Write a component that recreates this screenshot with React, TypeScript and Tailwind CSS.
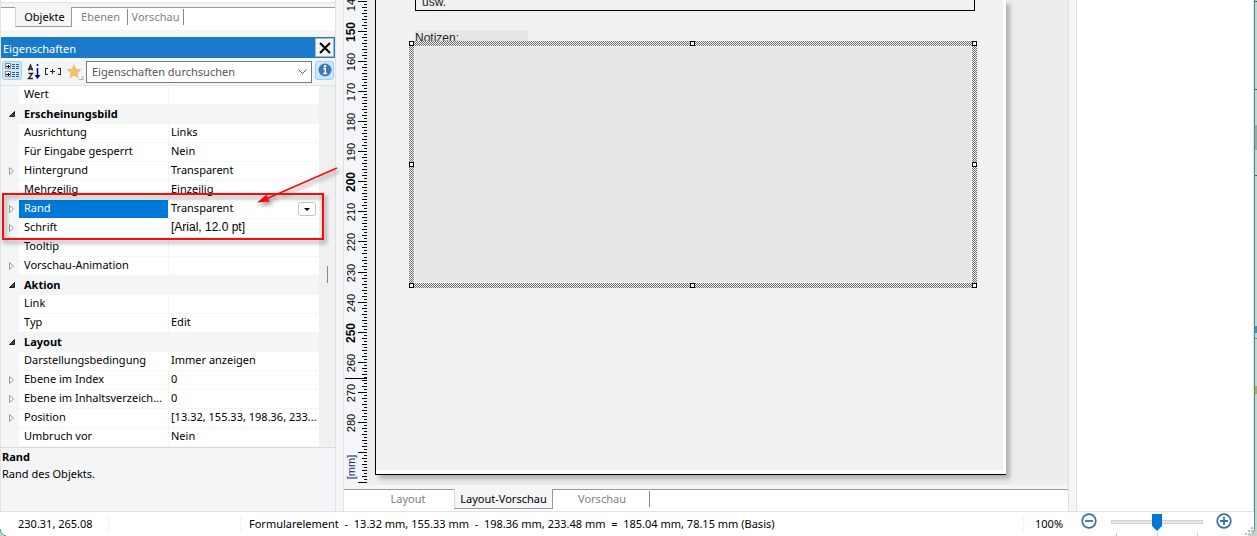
import React from "react";

type Row = { name: string; value?: string; kind?: "cat" | "exp"; selected?: boolean; arial?: boolean };

const rows: Row[] = [
  { name: "Wert" },
  { name: "Erscheinungsbild", kind: "cat" },
  { name: "Ausrichtung", value: "Links" },
  { name: "Für Eingabe gesperrt", value: "Nein" },
  { name: "Hintergrund", value: "Transparent", kind: "exp" },
  { name: "Mehrzeilig", value: "Einzeilig" },
  { name: "Rand", value: "Transparent", kind: "exp", selected: true },
  { name: "Schrift", value: "[Arial, 12.0 pt]", kind: "exp", arial: true },
  { name: "Tooltip" },
  { name: "Vorschau-Animation", kind: "exp" },
  { name: "Aktion", kind: "cat" },
  { name: "Link" },
  { name: "Typ", value: "Edit" },
  { name: "Layout", kind: "cat" },
  { name: "Darstellungsbedingung", value: "Immer anzeigen" },
  { name: "Ebene im Index", value: "0", kind: "exp" },
  { name: "Ebene im Inhaltsverzeich...", value: "0", kind: "exp" },
  { name: "Position", value: "[13.32, 155.33, 198.36, 233...", kind: "exp" },
  { name: "Umbruch vor", value: "Nein" },
];

function Expander({ open }: { open: boolean }) {
  return (
    <svg width="8" height="10" viewBox="0 0 8 10" className="ml-[7px] block">
      {open ? (
        <path d="M1.5 7.5 L6.5 2.5 V7.5 Z" fill="#444" stroke="#222" strokeWidth="1" />
      ) : (
        <path d="M1.5 1.5 V8.5 L5.5 5 Z" fill="#fff" stroke="#9a9a9a" strokeWidth="1" />
      )}
    </svg>
  );
}

function PropertyRow({ row }: { row: Row }) {
  if (row.kind === "cat") {
    return (
      <tr className="h-[19px] bg-[#f4f5f7]">
        <td className="p-0 pb-0.5"><Expander open /></td>
        <th colSpan={2} className="p-0 pb-0.5 pl-[5px] text-left leading-4 font-bold">{row.name}</th>
      </tr>
    );
  }
  return (
    <tr className="h-[19px]">
      <td className="bg-[#f4f5f7] p-0 pb-0.5">{row.kind === "exp" && <Expander open={false} />}</td>
      <td className={row.selected
        ? "overflow-hidden border-r border-b border-[#f4f5f7] bg-[#0078d7] p-0 pb-0.5 pl-[5px] leading-4 whitespace-nowrap text-white"
        : "overflow-hidden border-r border-b border-[#f4f5f7] bg-white p-0 pb-0.5 pl-[5px] leading-4 whitespace-nowrap"}>
        {row.name}
      </td>
      <td className="border-b border-[#f4f5f7] bg-white p-0 pl-0.5">
        <div className="flex h-[18px] items-start justify-between pr-[3px] leading-4">
          <span className={row.arial ? "truncate font-['Liberation_Sans',sans-serif] text-[12px]" : "whitespace-nowrap"}>{row.value}</span>
          {row.selected && (
            <button aria-label="Auswahl öffnen" className="mt-0.5 flex h-3.5 w-[18px] shrink-0 items-center justify-center rounded-[3px] border border-[#c4c4c4] bg-white">
              <svg width="6" height="3" viewBox="0 0 6 3"><path d="M0 0H6L3 3Z" fill="#000" /></svg>
            </button>
          )}
        </div>
      </td>
    </tr>
  );
}

function Sidebar() {
  return (
    <aside className="flex w-[336px] shrink-0 flex-col border-x border-[#dfe1e4]">
      <div className="h-[3px] border-b border-[#dfe1e4] bg-white" />
      <div className="mt-1 mb-[7px] flex h-[23px] items-start border-t border-[#999] bg-white" role="tablist">
        <button role="tab" aria-selected="true" className="-mt-px ml-3.5 h-5 w-[57px] border-r border-b border-l border-[#999] border-l-[#d8d8d8] bg-[#f4f5f7] pl-0.5">Objekte</button>
        <button role="tab" className="mt-px h-4 w-14 border-r border-[#888] pl-0.5 text-[#808080]">Ebenen</button>
        <button role="tab" className="mt-px h-4 w-14 border-r border-[#888] text-[#808080]">Vorschau</button>
      </div>
      <div className="flex h-[21px] shrink-0 items-center justify-between bg-[#1979ca] pr-px pl-0.5 text-white">
        <h2 className="pt-0.5">Eigenschaften</h2>
        <button aria-label="Schließen" className="flex h-[19px] w-[19px] items-center justify-center border border-[#b5b5b5] bg-[#f4f5f7]">
          <svg width="12" height="12" viewBox="0 0 12 12"><path d="M1 1L11 11M11 1L1 11" stroke="#000" strokeWidth="2" /></svg>
        </button>
      </div>
      <div className="flex h-7 shrink-0 items-center border-b border-[#dfe1e4] px-px">
        <button aria-label="Nach Kategorien" className="mb-[3px] flex h-[19px] w-5 items-center justify-center rounded-[3px] border border-[#99d1ff] bg-[#cce8ff]">
          <svg width="16" height="16" viewBox="0 0 16 16" shapeRendering="crispEdges" fill="none">
            <path d="M1.500 1.500h5v5h-5zM1.500 9.500h5v5h-5z" fill="#fff" stroke="#888" />
            <path d="M2 3.500h4v1H2zM3.500 2.500h1v3h-1zM2 11.500h4v1H2zM3.500 10.500h1v3h-1z" fill="#000" />
            <path d="M8 2.500h3M12 2.500h3M8 4.500h3M12 4.500h3M8 6.500h3M12 6.500h3M8 10.500h3M12 10.500h3M8 12.500h3M12 12.500h3M8 14.500h3M12 14.500h3" stroke="#456" />
          </svg>
        </button>
        <button aria-label="Alphabetisch" className="ml-[5px] flex h-5 w-4 items-center justify-center">
          <svg width="16" height="16" viewBox="0 0 16 16" fill="none">
            <path d="M1.500 6.500L3.500 1L5.500 6.500M1 5h5M1.500 9.500h4L1.500 14.500h4.500" stroke="#222" strokeWidth="1.300" />
            <path d="M10.500 0v2M10.500 4v8" stroke="#00008b" strokeWidth="1.500" />
            <path d="M7.500 11h6l-3 4z" fill="#00008b" />
          </svg>
        </button>
        <button aria-label="Alle ausklappen" className="mr-px ml-0.5 flex h-5 w-4 items-center justify-center">
          <svg width="16" height="8" viewBox="0 0 16 8" shapeRendering="crispEdges" fill="none" stroke="#222">
            <path d="M3 .5H.5V6.500H3M13 .5H15.500V6.500H13M5 3.500h5M7.500 1v5" />
          </svg>
        </button>
        <button aria-label="Favoriten" className="ml-1 flex h-5 w-[18px] items-center justify-center">
          <svg width="18" height="18" viewBox="0 0 18 18">
            <path d="M8 .8l2.300 4.900 5.300.6-3.900 3.700 1 5.400L8 12.700l-4.700 2.700 1-5.400L.4 6.300l5.300-.6z" fill="#efc273" />
            <path d="M13 16.500h4V13" fill="none" stroke="#aaa" />
          </svg>
        </button>
        <label className="ml-0.5 flex h-[22px] flex-1 items-center border border-[#7a7a7a] bg-white pr-1 pl-[5px]">
          <input aria-label="Eigenschaften durchsuchen" placeholder="Eigenschaften durchsuchen" className="min-w-0 flex-1 bg-transparent outline-none placeholder:text-[#555]" />
          <svg width="9" height="6" viewBox="0 0 9 6"><path d="M.5.5L4.500 4.500L8.500.5" fill="none" stroke="#555" /></svg>
        </label>
        <button aria-label="Information" className="mb-[3px] ml-[3px] flex h-[19px] w-[19px] items-center justify-center rounded-[3px] border border-[#99d1ff] bg-[#cce8ff]">
          <svg width="14" height="14" viewBox="0 0 14 14"><circle cx="7" cy="7" r="6.500" fill="#3f77b8" /><path d="M5.300 5.700h2v4.600M5.300 10.500h3.800" stroke="#fff" strokeWidth="1.500" fill="none" /><circle cx="7" cy="3.300" r="1.200" fill="#fff" /></svg>
        </button>
      </div>
      <div className="flex shrink-0">
        <div className="min-w-0 flex-1">
          <table className="w-full table-fixed border-separate border-spacing-0">
            <colgroup><col className="w-[18px]" /><col className="w-[150px]" /><col /></colgroup>
            <tbody>{rows.map((r) => <PropertyRow key={r.name} row={r} />)}</tbody>
          </table>
        </div>
        <div className="flex w-4 shrink-0 justify-center bg-[#f0f0f0] pt-[180px]"><div className="h-[17px] w-px bg-[#888]" /></div>
      </div>
      <section className="flex-1 border-t border-[#d8dadc] pl-px leading-[17px]">
        <h3 className="font-bold">Rand</h3>
        <p>Rand des Objekts.</p>
      </section>
      <svg className="pointer-events-none absolute top-[160px] left-0" width="345" height="90" viewBox="0 160 345 90">
        <g style={{ filter: "drop-shadow(2px 3px 2px rgba(0,0,0,.45))" }}>
          <rect x="3" y="194" width="320" height="45" fill="none" stroke="#fb0a0a" strokeWidth="2" />
          <path d="M337 168L266 199" stroke="#fb0a0a" strokeWidth="1.600" />
          <path d="M257 202.500L266.500 194.500L269.500 201.500Z" fill="#fb0a0a" />
        </g>
      </svg>
    </aside>
  );
}

const ticks = Array.from({ length: 161 }, (_, i) => i);
const labels = [140, 150, 160, 170, 180, 190, 200, 210, 220, 230, 240, 250, 260, 270, 280];
const tickY = (i: number) => 1 + i * 3 + (i > 84 ? 1 : 0);

function Ruler() {
  return (
    <svg className="h-full w-[27px] shrink-0 bg-[#f4f6f9] font-['Liberation_Sans',sans-serif]" aria-label="Lineal">
      <rect x="23" width="4" height="100%" fill="#ececec" />
      {ticks.map((i) => {
        const major = i % 10 === 0;
        return <rect key={i} x={major ? 14 : i % 2 ? 20 : 18} y={tickY(i)} width={major ? 9 : i % 2 ? 3 : 5} height="1" fill="#000" />;
      })}
      {labels.map((n, i) => (
        <text key={n} transform={`translate(11 ${tickY(i * 10) + 1}) rotate(-90)`} textAnchor="middle" fontSize={n % 50 === 0 ? 12 : 11} fontWeight={n % 50 === 0 ? 700 : 400}>{n}</text>
      ))}
      <rect x="1" y="378" width="22" height="1" />
      <text transform="translate(11 467) rotate(-90)" textAnchor="middle" fontSize="11" fill="#1b2f6b">[mm]</text>
    </svg>
  );
}

const handles = [
  "absolute size-[5px] border border-black bg-white top-0 left-0",
  "absolute size-[5px] border border-black bg-white top-0 left-1/2 -ml-[3px]",
  "absolute size-[5px] border border-black bg-white top-0 right-0",
  "absolute size-[5px] border border-black bg-white top-1/2 left-0 -mt-[3px]",
  "absolute size-[5px] border border-black bg-white top-1/2 right-0 -mt-[3px]",
  "absolute size-[5px] border border-black bg-white bottom-0 left-0",
  "absolute size-[5px] border border-black bg-white bottom-0 left-1/2 -ml-[3px]",
  "absolute size-[5px] border border-black bg-white right-0 bottom-0",
];

function Canvas() {
  return (
    <div className="relative min-h-0 flex-1 overflow-hidden bg-[#ececec]">
      <div className="absolute top-0 left-1 h-[475px] w-[631px] border-b border-l border-black bg-white shadow-[4px_4px_4px_0px_#b4b4b4]">
        <div className="mr-[3px] h-[470px] bg-[#f1f1f1] font-['Liberation_Sans',sans-serif] text-[12px]">
          <div className="absolute top-0 left-[39px] h-[11px] w-[560px] border-x border-b border-black">
            <span className="absolute -top-1 left-1.5 leading-3 text-[#222]">usw.</span>
          </div>
          <div className="absolute top-[30px] left-[39px] h-4 w-[113px] bg-[#e6e6e6] leading-4 text-[#222]">Notizen:</div>
          <div className="absolute top-[41px] left-[33px] h-[247px] w-[568px]">
            <svg className="absolute inset-0 h-full w-full" shapeRendering="crispEdges">
              <defs><pattern id="dither" width="2" height="2" patternUnits="userSpaceOnUse"><rect width="2" height="2" fill="#f0f0f0" /><rect width="1" height="1" fill="#707070" /><rect x="1" y="1" width="1" height="1" fill="#707070" /></pattern></defs>
              <rect width="100%" height="100%" fill="url(#dither)" />
            </svg>
            <div className="absolute inset-[5px] border border-[#f3f3f3] bg-[#e5e5e5]" />
            {handles.map((h) => <i key={h} className={h} />)}
          </div>
        </div>
      </div>
    </div>
  );
}

function ZoomIcon({ plus }: { plus?: boolean }) {
  return (
    <svg width="16" height="16" viewBox="0 0 16 16" fill="none" stroke="#3a6fad">
      <circle cx="8" cy="8" r="6.800" strokeWidth="1.700" />
      <path d={plus ? "M4 8h8M8 4v8" : "M4 8h8"} strokeWidth="1.800" />
    </svg>
  );
}

function StatusBar() {
  return (
    <footer className="relative flex h-[25px] shrink-0 items-center border-t border-[#dfe1e4]">
      <span className="w-[109px] border-r border-[#f3f3f3] pl-[18px]">230.31, 265.08</span>
      <span className="ml-[131px] flex-1 border-l border-[#f3f3f3] pl-2 whitespace-pre">Formularelement  -  13.32 mm, 155.33 mm  -  198.36 mm, 233.48 mm  =  185.04 mm, 78.15 mm (Basis)</span>
      <span className="w-[58px] border-l border-[#f3f3f3] pl-[11px]">100%</span>
      <div className="flex h-full items-start pt-px pr-[22px]">
        <button aria-label="Verkleinern"><ZoomIcon /></button>
        <div className="mr-[13px] ml-3.5 flex w-[92px] flex-col">
          <input
            type="range"
            aria-label="Zoom"
            defaultValue={50}
            className="block h-[18px] w-full appearance-none bg-transparent [&::-webkit-slider-runnable-track]:h-1 [&::-webkit-slider-runnable-track]:border [&::-webkit-slider-runnable-track]:border-[#d2d2d2] [&::-webkit-slider-runnable-track]:bg-[#e7e7e7] [&::-webkit-slider-thumb]:-mt-[7px] [&::-webkit-slider-thumb]:h-[17px] [&::-webkit-slider-thumb]:w-2.5 [&::-webkit-slider-thumb]:appearance-none [&::-webkit-slider-thumb]:bg-[#0078d7] [&::-webkit-slider-thumb]:[clip-path:polygon(0_0,100%_0,100%_70%,50%_100%,0_70%)]"
          />
          <div className="mt-0.5 flex justify-between px-[5px]">
            <i className="h-[3px] w-px bg-[#c4c4c4]" />
            <i className="h-[3px] w-px bg-[#c4c4c4]" />
            <i className="h-[3px] w-px bg-[#c4c4c4]" />
          </div>
        </div>
        <button aria-label="Vergrößern"><ZoomIcon plus /></button>
      </div>
      <svg className="absolute right-0 bottom-0" width="9" height="9" viewBox="0 0 9 9" fill="#bfbfbf">
        <path d="M6 0h2v2H6zM3 3h2v2H3zM6 3h2v2H6zM0 6h2v2H0zM3 6h2v2H3zM6 6h2v2H6z" />
      </svg>
      <svg className="absolute bottom-0 left-0" width="6" height="8" viewBox="0 0 6 8" fill="none">
        <path d="M0 1C.5 5 2.500 7 6 8H0z" fill="#d0d0d0" /><path d="M0 1C.5 5 2.500 7 6 8" stroke="#1aab8a" />
      </svg>
    </footer>
  );
}

export default function App() {
  return (
    <div className="relative flex h-screen overflow-hidden bg-[#d0d0d0] font-['Noto_Sans',sans-serif] text-[11px] leading-4 text-black">
      <div className="flex min-w-0 flex-1 flex-col rounded-br-lg border-r border-[#1aab8a] bg-white">
        <main className="flex min-h-0 flex-1 bg-[#f4f5f7]">
          <Sidebar />
          <section className="ml-[7px] flex min-w-0 flex-1 flex-col border-x border-[#dfe1e4]">
            <div className="flex min-h-0 flex-1"><Ruler /><Canvas /></div>
            <div className="mt-1 flex h-[22px] items-start border-t border-[#999] bg-white text-[#808080]" role="tablist">
              <button role="tab" className="mt-px h-4 w-[110px] pl-[18px]">Layout</button>
              <button role="tab" aria-selected="true" className="-mt-px h-5 w-[99px] border-r border-b border-l border-[#999] border-l-[#d8d8d8] bg-[#f4f5f7] text-black">Layout-Vorschau</button>
              <button role="tab" className="mt-px h-4 w-[97px] border-r border-[#888] pl-0.5">Vorschau</button>
            </div>
          </section>
          <div className="ml-[7px] w-[178px] border-x border-[#dfe1e4] bg-white" />
        </main>
        <StatusBar />
      </div>
      <svg className="h-full w-0.5" preserveAspectRatio="none" viewBox="0 0 2 536" shapeRendering="crispEdges">
        <path d="M0 1h2v1H0zM0 89h2v1H0zM0 175h2v1H0z" fill="#555" />
        <path d="M0 125h2v25H0z" fill="#a5a5a5" />
        <path d="M0 326h2v7H0z" fill="#5f7fae" />
        <path d="M0 338h2v1H0z" fill="#4aa58c" />
        <path d="M0 386h2v8H0z" fill="#c99a5a" />
      </svg>
    </div>
  );
}
